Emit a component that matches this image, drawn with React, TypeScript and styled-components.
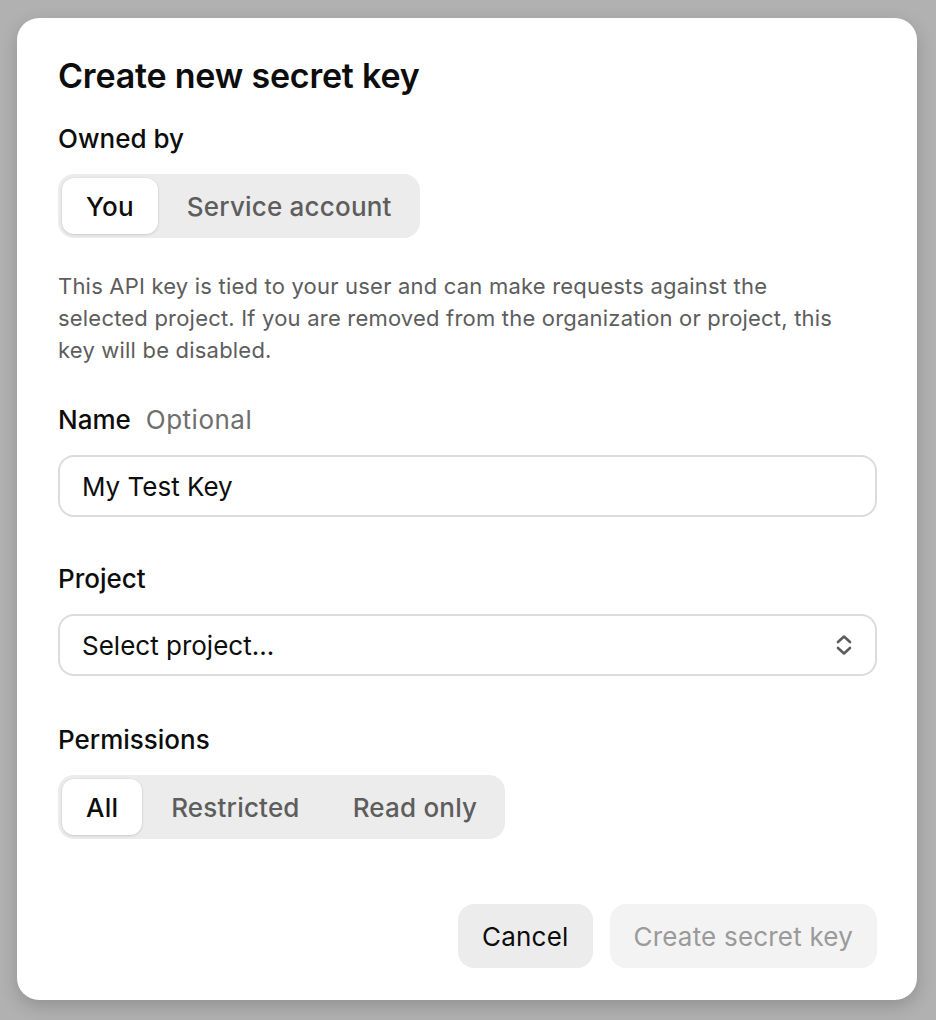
import React, { useState } from "react";
import styled, { createGlobalStyle } from "styled-components";

const Global = createGlobalStyle`
  html, body { margin: 0; padding: 0; background: #b1b1b1; }
  body { font-family: Inter, "Noto Sans", sans-serif; -webkit-font-smoothing: antialiased; }
  * { box-sizing: border-box; }
`;

const Page = styled.div`
  width: 936px;
  height: 1020px;
  padding: 18px 19px 20px 17px;
`;

const Modal = styled.div`
  width: 900px;
  height: 982px;
  background: #fff;
  border-radius: 22px;
  box-shadow: 0 6px 18px rgba(0, 0, 0, 0.18);
  padding: 38px 40px 32px 41px;
  display: flex;
  flex-direction: column;
`;

const Title = styled.h1`
  margin: 0;
  font-size: 34px;
  line-height: 40px;
  font-weight: 600;
  color: #0d0d0d;
  letter-spacing: -0.2px;
`;

const Label = styled.div<{ $top: number }>`
  margin-top: ${(p) => p.$top}px;
  margin-bottom: 19px;
  font-size: 26px;
  line-height: 32px;
  font-weight: 500;
  color: #0d0d0d;
  display: flex;
  gap: 15px;
`;

const Hint = styled.span`
  font-weight: 400;
  color: #6e6e6e;
  letter-spacing: 0.5px;
`;

const Segmented = styled.div`
  display: inline-flex;
  align-self: flex-start;
  gap: 5px;
  padding: 4px;
  background: #ececec;
  border-radius: 16px;
  height: 64px;
`;

const Segment = styled.button<{ $active?: boolean }>`
  border: none;
  font-family: inherit;
  font-size: 26px;
  font-weight: 500;
  letter-spacing: 0.2px;
  padding: 0 24px;
  border-radius: 12px;
  cursor: pointer;
  background: ${(p) => (p.$active ? "#fff" : "transparent")};
  color: ${(p) => (p.$active ? "#0d0d0d" : "#5d5d5d")};
  box-shadow: ${(p) =>
    p.$active ? "0 1px 3px rgba(0,0,0,0.12), 0 0 0 0.5px rgba(0,0,0,0.05)" : "none"};
`;

const Description = styled.p`
  margin: 32px 0 0;
  font-size: 22px;
  line-height: 32px;
  letter-spacing: 0.2px;
  color: #5d5d5d;
  max-width: 790px;
`;

const Field = styled.div`
  height: 62px;
  border: 2px solid #dcdcdc;
  border-radius: 16px;
  display: flex;
  align-items: center;
  justify-content: space-between;
  padding: 0 22px;
  font-size: 26px;
  color: #0d0d0d;
`;

const Footer = styled.div`
  margin-top: auto;
  display: flex;
  justify-content: flex-end;
  gap: 17px;
`;

const Button = styled.button<{ $disabled?: boolean }>`
  height: 64px;
  border: none;
  border-radius: 16px;
  font-family: inherit;
  font-size: 26px;
  font-weight: 400;
  letter-spacing: 0.2px;
  padding: 0 24px;
  background: ${(p) => (p.$disabled ? "#f3f3f3" : "#ececec")};
  color: ${(p) => (p.$disabled ? "#9a9a9a" : "#0d0d0d")};
`;

const Chevrons = () => (
  <svg width="18" height="24" viewBox="0 0 18 24" fill="none">
    <path d="M3 9 L9 3.5 L15 9" stroke="#5d5d5d" strokeWidth="2.6" strokeLinecap="round" strokeLinejoin="round" />
    <path d="M3 15 L9 20.5 L15 15" stroke="#5d5d5d" strokeWidth="2.6" strokeLinecap="round" strokeLinejoin="round" />
  </svg>
);

export default function App() {
  const [owner, setOwner] = useState("you");
  const [perm, setPerm] = useState("all");
  return (
    <Page>
      <Global />
      <Modal>
        <Title>Create new secret key</Title>
        <Label $top={27}>Owned by</Label>
        <Segmented>
          <Segment $active={owner === "you"} onClick={() => setOwner("you")}>You</Segment>
          <Segment $active={owner === "svc"} onClick={() => setOwner("svc")}>Service account</Segment>
        </Segmented>
        <Description>
          This API key is tied to your user and can make requests against the selected project. If you are removed from the organization or project, this key will be disabled.
        </Description>
        <Label $top={38}>
          Name <Hint>Optional</Hint>
        </Label>
        <Field>My Test Key</Field>
        <Label $top={46}>Project</Label>
        <Field>
          Select project...
          <Chevrons />
        </Field>
        <Label $top={48}>Permissions</Label>
        <Segmented>
          <Segment $active={perm === "all"} onClick={() => setPerm("all")}>All</Segment>
          <Segment $active={perm === "restricted"} onClick={() => setPerm("restricted")}>Restricted</Segment>
          <Segment $active={perm === "read"} onClick={() => setPerm("read")}>Read only</Segment>
        </Segmented>
        <Footer>
          <Button>Cancel</Button>
          <Button $disabled>Create secret key</Button>
        </Footer>
      </Modal>
    </Page>
  );
}
